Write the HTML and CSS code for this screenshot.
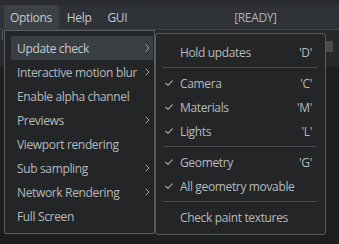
FILE: index.html
```html
<!DOCTYPE html>
<html>
<head>
<meta charset="utf-8">
<link rel="stylesheet" href="styles.css">
</head>
<body>
<div class="app">
  <div class="topstrip"></div>
  <div class="menubar">
    <div class="mb-item active">Options</div>
    <div class="mb-item">Help</div>
    <div class="mb-item">GUI</div>
    <div class="status">[READY]</div>
  </div>
  <div class="content">
    <div class="panel-row">
      <div class="left-box"></div>
      <div class="thumb"></div>
    </div>
  </div>

  <div class="menu main-menu">
    <div class="item hl"><span>Update check</span><svg class="chev" width="5" height="8" viewBox="0 0 5 8"><polyline points="0.5,0.5 4,4 0.5,7.5" /></svg></div>
    <div class="item"><span>Interactive motion blur</span><svg class="chev" width="5" height="8" viewBox="0 0 5 8"><polyline points="0.5,0.5 4,4 0.5,7.5" /></svg></div>
    <div class="item"><span>Enable alpha channel</span></div>
    <div class="item"><span>Previews</span><svg class="chev" width="5" height="8" viewBox="0 0 5 8"><polyline points="0.5,0.5 4,4 0.5,7.5" /></svg></div>
    <div class="item"><span>Viewport rendering</span></div>
    <div class="item"><span>Sub sampling</span><svg class="chev" width="5" height="8" viewBox="0 0 5 8"><polyline points="0.5,0.5 4,4 0.5,7.5" /></svg></div>
    <div class="item"><span>Network Rendering</span><svg class="chev" width="5" height="8" viewBox="0 0 5 8"><polyline points="0.5,0.5 4,4 0.5,7.5" /></svg></div>
    <div class="item"><span>Full Screen</span></div>
  </div>

  <div class="menu sub-menu">
    <div class="sitem"><span class="ck"></span><span class="lbl">Hold updates</span><span class="key">'D'</span></div>
    <div class="sep"></div>
    <div class="sitem"><span class="ck"><svg width="8" height="6" viewBox="0 0 8 6"><polyline points="0.5,3 3,5.3 7.5,0.7" /></svg></span><span class="lbl">Camera</span><span class="key">'C'</span></div>
    <div class="sitem"><span class="ck"><svg width="8" height="6" viewBox="0 0 8 6"><polyline points="0.5,3 3,5.3 7.5,0.7" /></svg></span><span class="lbl">Materials</span><span class="key">'M'</span></div>
    <div class="sitem"><span class="ck"><svg width="8" height="6" viewBox="0 0 8 6"><polyline points="0.5,3 3,5.3 7.5,0.7" /></svg></span><span class="lbl">Lights</span><span class="key">'L'</span></div>
    <div class="sep"></div>
    <div class="sitem"><span class="ck"><svg width="8" height="6" viewBox="0 0 8 6"><polyline points="0.5,3 3,5.3 7.5,0.7" /></svg></span><span class="lbl">Geometry</span><span class="key">'G'</span></div>
    <div class="sitem"><span class="ck"><svg width="8" height="6" viewBox="0 0 8 6"><polyline points="0.5,3 3,5.3 7.5,0.7" /></svg></span><span class="lbl">All geometry movable</span><span class="key"></span></div>
    <div class="sep"></div>
    <div class="sitem"><span class="ck"></span><span class="lbl">Check paint textures</span><span class="key"></span></div>
  </div>
</div>
</body>
</html>
```

FILE: styles.css
```css
* { box-sizing: border-box; }
html, body {
  margin: 0;
  padding: 0;
  width: 339px;
  height: 244px;
  overflow: hidden;
  background: #1d1e20;
  font-family: "Open Sans", "Noto Sans", sans-serif;
  font-size: 12px;
  letter-spacing: -0.35px;
  white-space: nowrap;
}
.app {
  position: relative;
  width: 339px;
  height: 244px;
  display: flex;
  flex-direction: column;
}
.topstrip {
  height: 5px;
  background: #2a2c30;
}
.menubar {
  height: 25px;
  background: #2f3236;
  border-bottom: 1px solid #3e4246;
  display: flex;
  align-items: stretch;
  padding-left: 4px;
  color: #c4c9cd;
}
.mb-item {
  display: flex;
  align-items: center;
  padding: 0 8px 0 8px;
}
.mb-item.active {
  background: #3c4146;
  padding: 0 7px 0 6px;
}
.status {
  margin-left: 99px;
  display: flex;
  align-items: center;
  color: #aeb3b8;
}
.content {
  flex: 1;
  background: #1d1e20;
}
.panel-row {
  height: 37px;
  background: #28292b;
  display: flex;
  justify-content: space-between;
  align-items: flex-start;
}
.left-box {
  width: 3px;
  height: 10px;
  border-right: 1px solid #55595d;
  background: #2e3033;
}
.thumb {
  width: 8px;
  height: 11px;
  margin-top: 11px;
  margin-right: 6px;
  background: #4a4b4d;
}
.menu {
  position: absolute;
  background: #242527;
  border: 1px solid #5a5e62;
  color: #b5babe;
}
.main-menu {
  left: 4px;
  top: 30px;
  width: 151px;
  padding: 5px 1px 5px 6px;
  border-radius: 0 0 2px 2px;
}
.item {
  height: 24px;
  display: flex;
  align-items: center;
  justify-content: space-between;
  padding: 0 3px 0 6px;
}
.item.hl {
  background: #393e43;
  color: #c3cbcf;
}
.chev {
  fill: none;
  stroke: #9ea3a8;
  stroke-width: 1;
}
.sub-menu {
  left: 155px;
  top: 33px;
  width: 171px;
  padding: 6px 6px 5px 6px;
  border-radius: 3px;
  border-color: #555a5e;
}
.sitem {
  height: 24px;
  display: flex;
  align-items: center;
}
.ck {
  width: 18px;
  padding-left: 3px;
  display: flex;
  align-items: center;
}
.ck svg {
  fill: none;
  stroke: #a9aeb3;
  stroke-width: 1.1;
}
.lbl {
  flex: 1;
}
.key {
  padding-right: 7px;
}
.sep {
  height: 7px;
  display: flex;
  align-items: center;
  padding: 0 2px 0 1px;
}
.sep::before {
  content: "";
  flex: 1;
  height: 1px;
  background: #45484c;
}
```
